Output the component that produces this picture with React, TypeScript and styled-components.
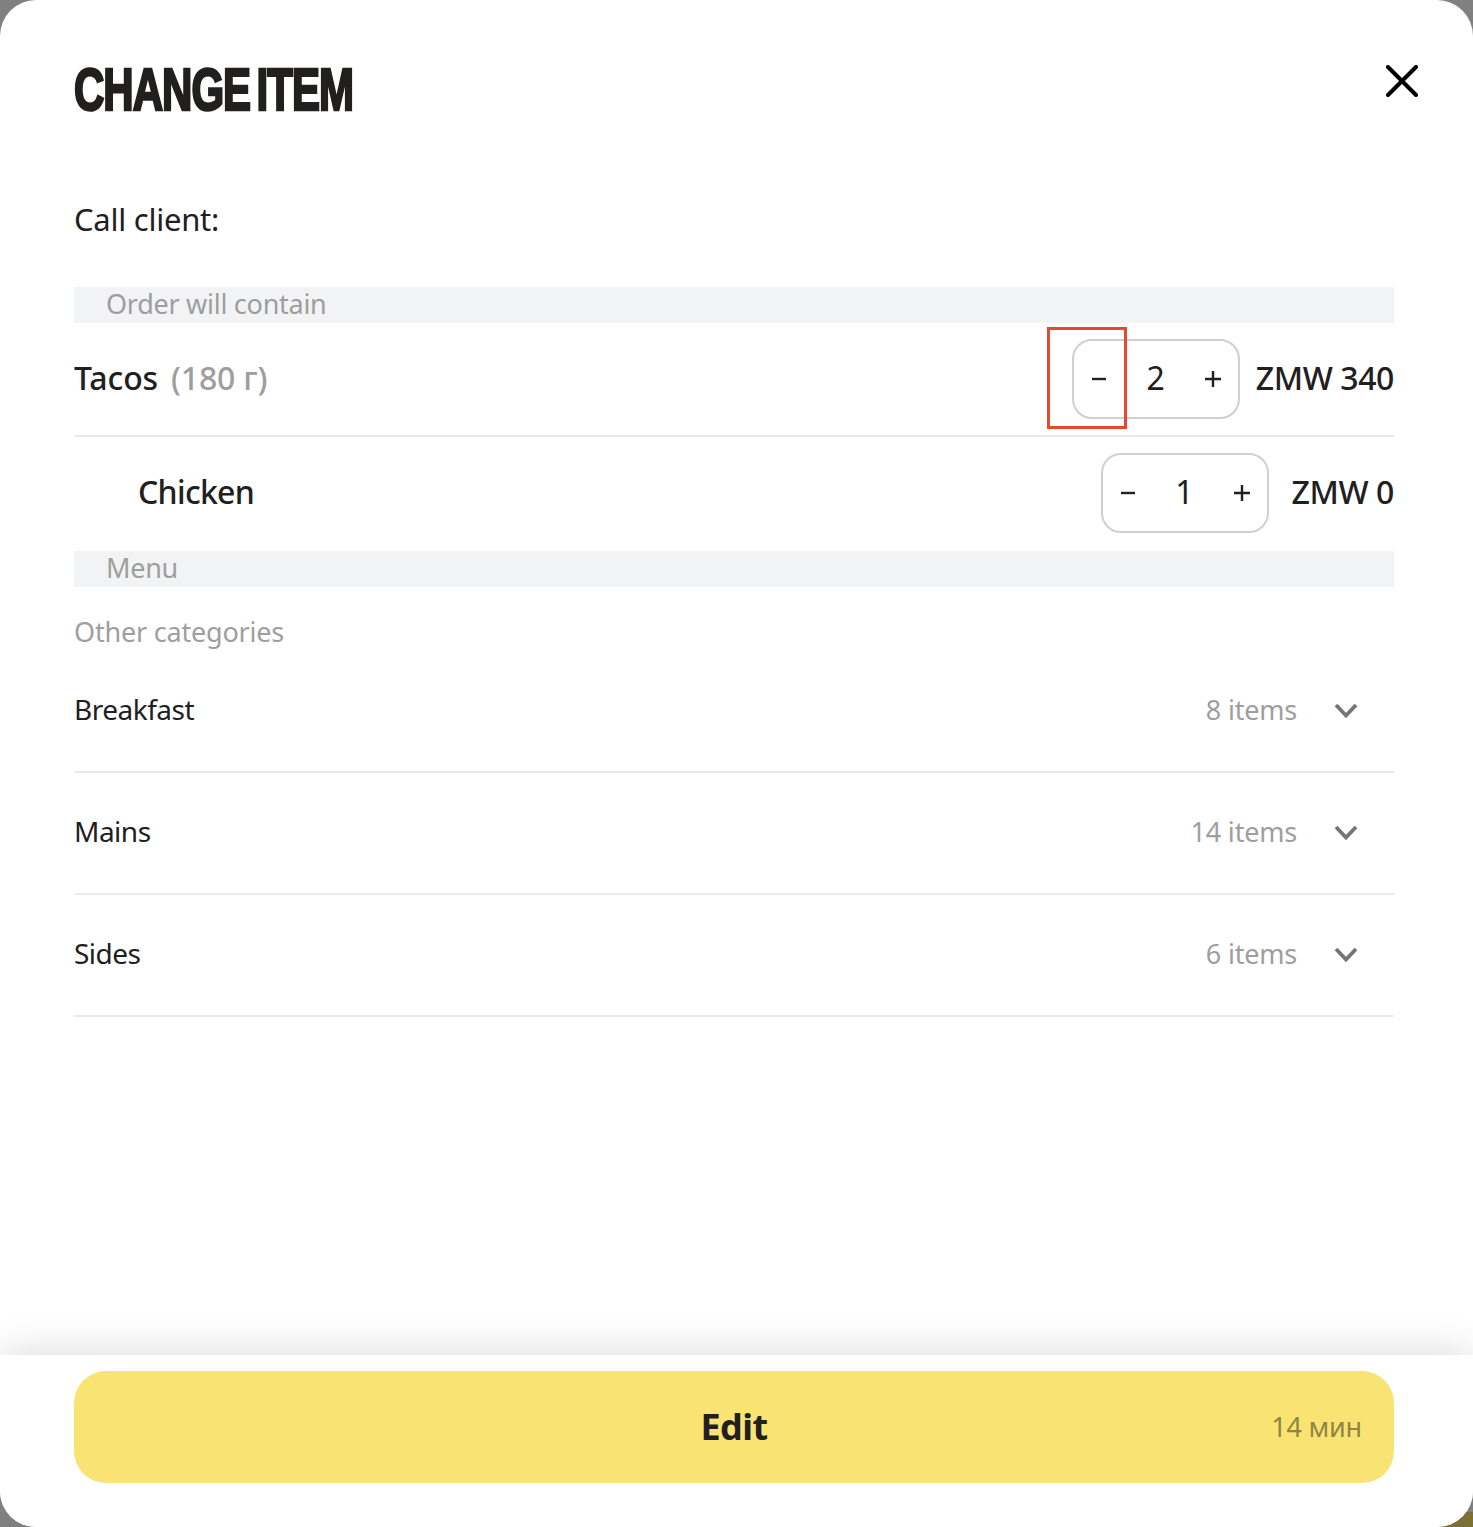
import React from "react";
import styled, { createGlobalStyle } from "styled-components";

const Global = createGlobalStyle`
  html, body { margin: 0; padding: 0; background: #808080; }
  * { box-sizing: border-box; }
`;

const Backdrop = styled.div`
  position: relative;
  width: 1473px;
  height: 1527px;
  background: #808080;
  overflow: hidden;
`;

const OliveCorner = styled.div`
  position: absolute;
  right: 0;
  bottom: 0;
  width: 40px;
  height: 15px;
  background: #7a6f35;
`;

const Sheet = styled.div`
  position: relative;
  display: flex;
  flex-direction: column;
  height: 100%;
  background: #fff;
  border-radius: 36px;
  overflow: hidden;
  font-family: "Noto Sans", "Liberation Sans", sans-serif;
  color: #21201f;
`;

const Body = styled.div`
  flex: 1;
  padding: 56px 79px 0 74px;
  display: flex;
  flex-direction: column;
`;

const Title = styled.h1`
  margin: 0;
  height: 68px;
  font-family: "Liberation Sans", sans-serif;
  font-weight: 700;
  font-size: 60px;
  line-height: 68px;
  letter-spacing: -1.4px;
  word-spacing: -6px;
  white-space: nowrap;
  color: #21201f;
  -webkit-text-stroke: 2.6px #21201f;
  transform: scaleX(0.7);
  transform-origin: left center;
`;

const Close = styled.button`
  position: absolute;
  top: 61px;
  right: 51px;
  width: 40px;
  height: 40px;
  padding: 0;
  border: 0;
  background: none;
  display: flex;
  align-items: center;
  justify-content: center;
`;

const CallLine = styled.div`
  margin-top: 76px;
  height: 40px;
  font-size: 31px;
  line-height: 38px;
  letter-spacing: -0.25px;
`;

const SectionBar = styled.div<{ $top: number }>`
  margin-top: ${(p) => p.$top}px;
  height: 36px;
  padding-left: 32px;
  background: #f2f3f5;
  color: #9e9e9e;
  font-size: 27px;
  line-height: 34px;
  letter-spacing: -0.27px;
`;

const ItemRow = styled.div<{ $divider?: boolean; $indent?: number; $height: number; $gap: number; $lift?: number }>`
  display: flex;
  align-items: center;
  gap: ${(p) => p.$gap}px;
  height: ${(p) => p.$height}px;
  padding-left: ${(p) => p.$indent ?? 0}px;
  padding-bottom: ${(p) => p.$lift ?? 0}px;
  border-bottom: ${(p) => (p.$divider ? "2px solid #e9e9e9" : "0")};
`;

const ItemName = styled.div<{ $tracking: number }>`
  flex: 1;
  margin-top: -2px;
  font-size: 32px;
  font-weight: 500;
  line-height: 40px;
  letter-spacing: ${(p) => p.$tracking}px;
`;

const Weight = styled.span`
  margin-left: 13px;
  color: #9e9e9e;
  letter-spacing: -0.2px;
`;

const Stepper = styled.div`
  position: relative;
  display: grid;
  grid-template-columns: 50px 1fr 50px;
  align-items: center;
  width: 168px;
  height: 80px;
  border: 2px solid #d0d0d0;
  border-radius: 20px;
`;

const StepButton = styled.span`
  display: flex;
  align-items: center;
  justify-content: center;
`;

const Count = styled.span`
  margin-top: -2px;
  text-align: center;
  font-size: 32px;
  line-height: 40px;
`;

const Annotation = styled.div`
  position: absolute;
  left: -27px;
  top: -14px;
  width: 80px;
  height: 102px;
  border: 3.5px solid #e5492f;
`;

const Price = styled.div`
  margin-top: -2px;
  font-size: 32px;
  font-weight: 500;
  line-height: 40px;
  letter-spacing: -0.4px;
  white-space: nowrap;
`;

const OtherLabel = styled.div`
  margin-top: 28px;
  height: 36px;
  color: #9e9e9e;
  font-size: 27px;
  line-height: 34px;
  letter-spacing: -0.2px;
`;

const CategoryRow = styled.div`
  display: flex;
  align-items: center;
  height: 122px;
  padding: 0 36px 0 0;
  border-bottom: 2px solid #e9e9e9;
`;

const CategoryName = styled.div`
  flex: 1;
  font-size: 28px;
  line-height: 36px;
  letter-spacing: -0.5px;
  margin-top: -4px;
`;

const CategoryCount = styled.div`
  color: #9e9e9e;
  font-size: 27px;
  line-height: 36px;
  letter-spacing: -0.2px;
  margin-top: -2px;
`;

const Chevron = styled.svg`
  margin-left: 37px;
  margin-top: -2px;
`;

const Footer = styled.div`
  position: relative;
  height: 172px;
  padding: 16px 79px 44px 74px;
  background: #fff;
  box-shadow: 0 0 40px rgba(0, 0, 0, 0.16);
`;

const Submit = styled.button`
  position: relative;
  display: flex;
  align-items: center;
  justify-content: center;
  width: 100%;
  height: 112px;
  padding: 0 0 2px;
  border: 0;
  border-radius: 32px;
  background: #f9e473;
  color: #21201f;
  font-family: inherit;
  font-size: 36px;
  font-weight: 700;
  letter-spacing: -0.6px;
`;

const Eta = styled.span`
  position: absolute;
  right: 32px;
  top: calc(50% - 1px);
  transform: translateY(-50%);
  color: #8f8443;
  font-size: 27px;
  font-weight: 400;
  letter-spacing: -0.2px;
`;

const Minus = () => (
  <svg width="16" height="4" viewBox="0 0 16 4" aria-hidden>
    <path d="M1 2h14" stroke="#21201f" strokeWidth="2.4" />
  </svg>
);
const Plus = () => (
  <svg width="18" height="18" viewBox="0 0 18 18" aria-hidden>
    <path d="M1 9h16M9 1v16" stroke="#21201f" strokeWidth="2.4" />
  </svg>
);

const StepperControl = ({ value, marked }: { value: number; marked?: boolean }) => (
  <Stepper>
    {marked && <Annotation />}
    <StepButton><Minus /></StepButton>
    <Count>{value}</Count>
    <StepButton><Plus /></StepButton>
  </Stepper>
);

const categories = [
  { name: "Breakfast", count: "8 items" },
  { name: "Mains", count: "14 items" },
  { name: "Sides", count: "6 items" },
];

export default function App() {
  return (
    <Backdrop>
      <Global />
      <OliveCorner />
      <Sheet>
        <Body>
          <Title>CHANGE ITEM</Title>
          <CallLine>Call client:</CallLine>
          <SectionBar $top={47}>Order will contain</SectionBar>
          <ItemRow $divider $height={114} $gap={16}>
            <ItemName $tracking={-0.1}>Tacos<Weight>(180 г)</Weight></ItemName>
            <StepperControl value={2} marked />
            <Price>ZMW 340</Price>
          </ItemRow>
          <ItemRow $height={114} $gap={23} $indent={64} $lift={2}>
            <ItemName $tracking={-0.7}>Chicken</ItemName>
            <StepperControl value={1} />
            <Price>ZMW 0</Price>
          </ItemRow>
          <SectionBar $top={0}>Menu</SectionBar>
          <OtherLabel>Other categories</OtherLabel>
          <div>
            {categories.map((c) => (
              <CategoryRow key={c.name}>
                <CategoryName>{c.name}</CategoryName>
                <CategoryCount>{c.count}</CategoryCount>
                <Chevron width="24" height="16" viewBox="0 0 24 16" aria-hidden>
                  <path d="M2 3l10 10.500 10-10.500" fill="none" stroke="#757575" strokeWidth="3.8" />
                </Chevron>
              </CategoryRow>
            ))}
          </div>
        </Body>
        <Close aria-label="Close">
          <svg width="32" height="32" viewBox="0 0 32 32" aria-hidden>
            <path d="M2 2l28 28M30 2L2 30" stroke="#000" strokeWidth="4" strokeLinecap="round" />
          </svg>
        </Close>
        <Footer>
          <Submit>Edit<Eta>14 мин</Eta></Submit>
        </Footer>
      </Sheet>
    </Backdrop>
  );
}
